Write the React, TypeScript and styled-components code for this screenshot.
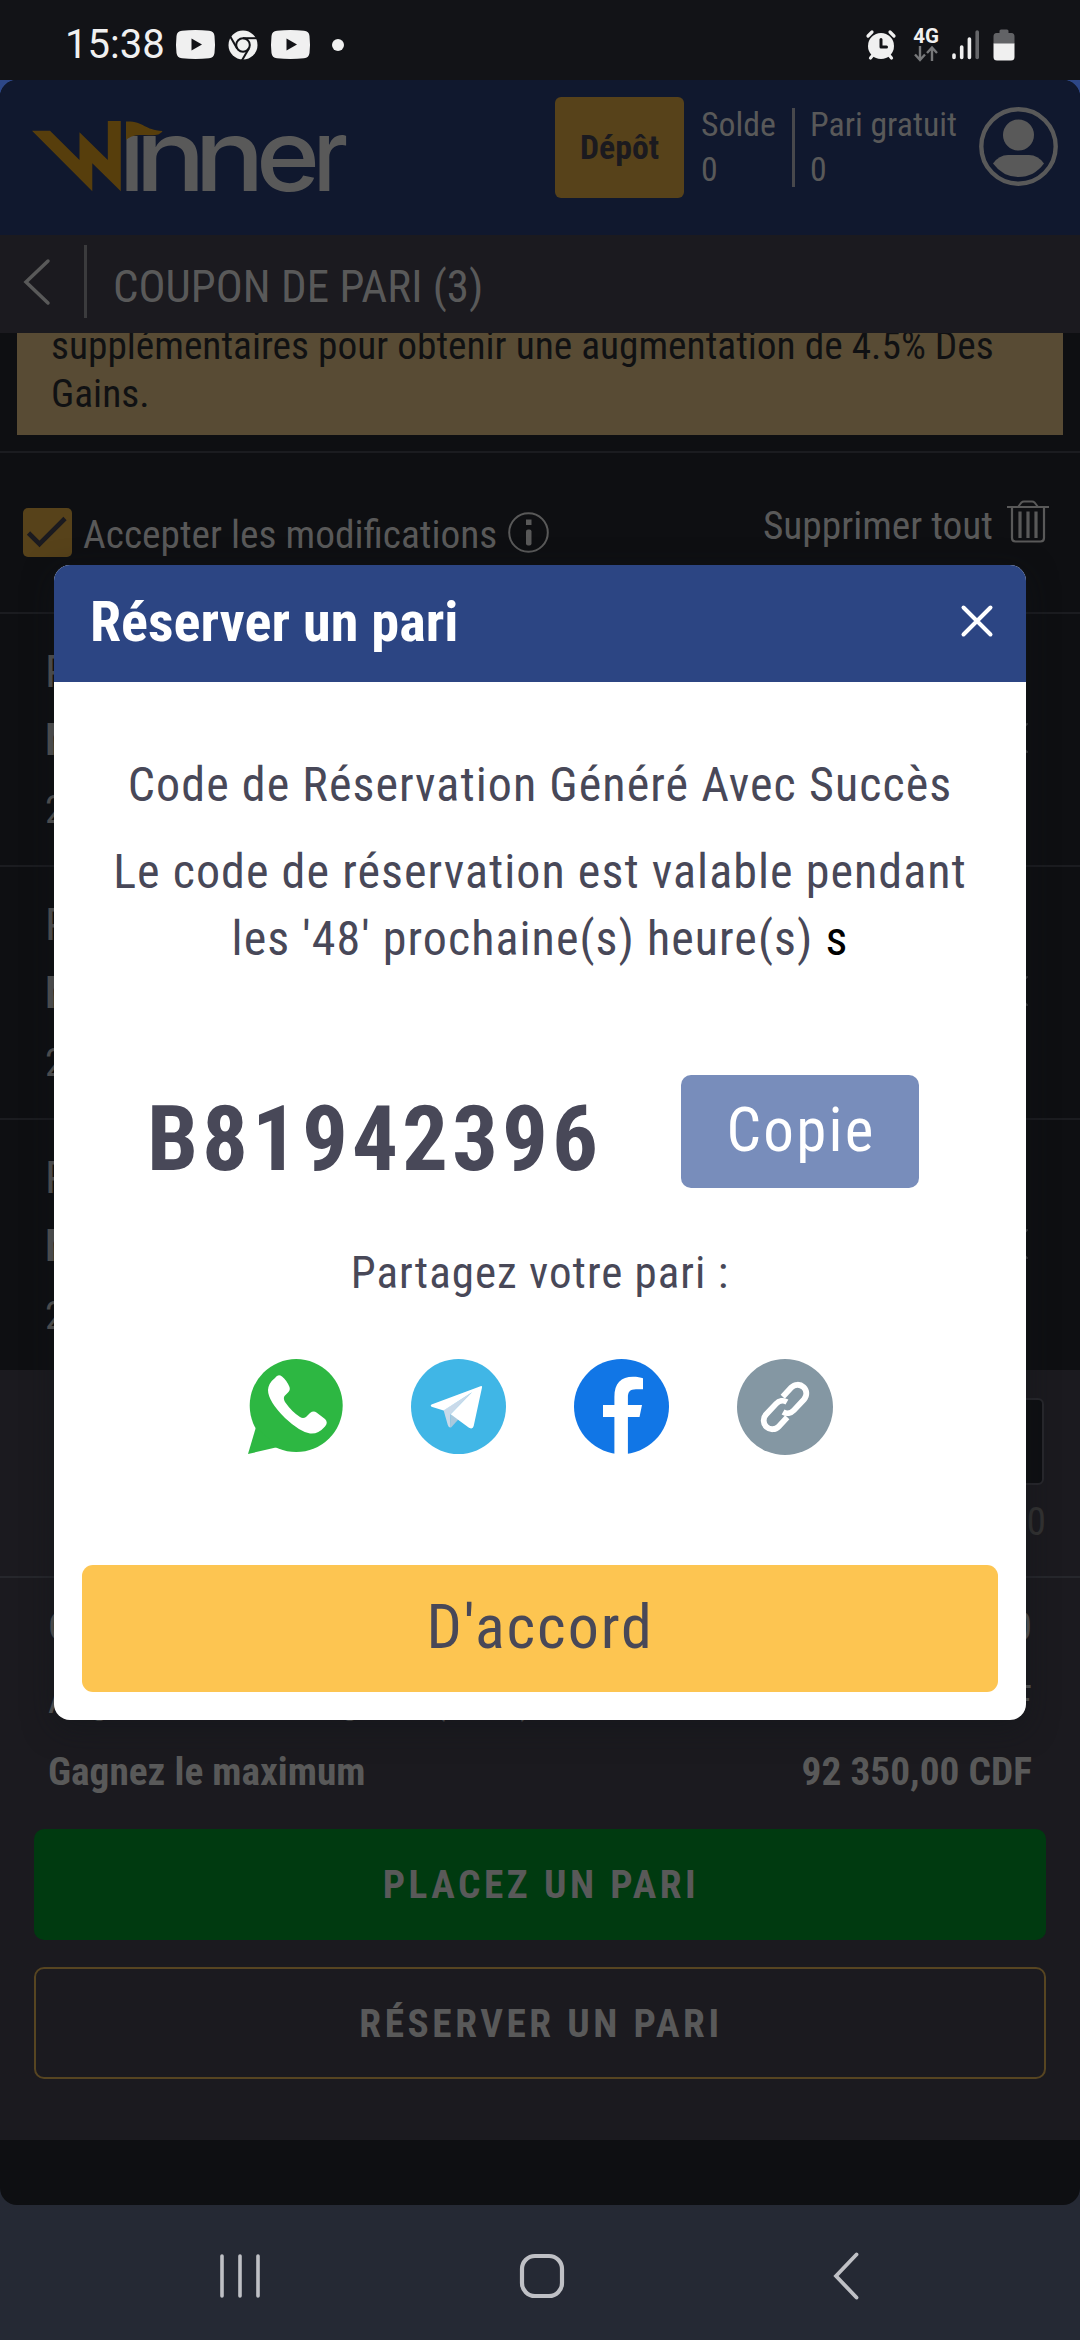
import React from "react";
import styled, { createGlobalStyle } from "styled-components";

const GlobalStyle = createGlobalStyle`
  *, *::before, *::after { box-sizing: border-box; }
  body { margin: 0; background: #252934; }
  svg { display: block; flex: none; overflow: visible; }
  button { font: inherit; border: 0; padding: 0; margin: 0; }
`;

const Screen = styled.div`
  width: 1080px;
  height: 2340px;
  display: flex;
  flex-direction: column;
  overflow: hidden;
  font-family: "Roboto Condensed", Roboto, sans-serif;
  background: #252934;
`;

/* ---------- system status bar ---------- */

const StatusBar = styled.div`
  height: 80px;
  flex: none;
  display: flex;
  align-items: center;
  padding: 9px 65px 0 65px;
  background: #121317;
  color: #f0f0f0;
`;

const Clock = styled.span`
  font-family: Roboto, sans-serif;
  font-size: 40px;
  line-height: 48px;
  width: 111px;
`;

const StatusGroup = styled.div`
  display: flex;
  align-items: center;
  gap: 13px;
`;

const Spacer = styled.div`
  flex: 1;
`;

const Dot = styled.i`
  width: 12px;
  height: 12px;
  margin-left: 9px;
  border-radius: 50%;
  background: #f0f0f0;
`;

const Network = styled.div`
  width: 26px;
  margin-left: 4px;
  display: flex;
  flex-direction: column;
  align-items: center;
  font: 700 20.5px/18px Roboto, sans-serif;
  gap: 1px;
`;

/* ---------- page ---------- */

const PageFrame = styled.div`
  flex: none;
  height: 2125px;
  background: linear-gradient(#2d4787 50%, #252934 50%);
`;

const Page = styled.div`
  position: relative;
  height: 100%;
  display: flex;
  flex-direction: column;
  border-radius: 17px;
  overflow: hidden;
  background: #0e0f12;
  color: #595959;
`;

const Header = styled.header`
  height: 155px;
  flex: none;
  display: flex;
  align-items: flex-start;
  padding: 17px 22px 0 32px;
  background: #10182e;
  font-size: 33.75px;
  line-height: 45px;
`;

const LogoBox = styled.div`
  margin-top: 24px;
  width: 523px;
`;

const DepositButton = styled.button`
  width: 129px;
  height: 101px;
  border-radius: 6px;
  background: #57421a;
  color: #1b1a1f;
  font-weight: 700;
`;

const Balance = styled.div<{ $width: number; $left: number }>`
  width: ${(p) => p.$width}px;
  margin: 5px 0 0 ${(p) => p.$left}px;
  white-space: nowrap;
`;

const HeaderRule = styled.div`
  width: 3px;
  height: 79px;
  margin-top: 11px;
  background: #48484c;
`;

const AvatarBox = styled.div`
  margin: 10px 0 0 auto;
`;

const TitleBar = styled.div`
  height: 98px;
  flex: none;
  display: flex;
  align-items: center;
  padding: 0 23px 5px;
  background: #1b1a1f;
`;

const TitleRule = styled.div`
  width: 3px;
  height: 73px;
  margin: 0 26px 0 34px;
  background: #3b3b3d;
`;

const PageTitle = styled.h1`
  margin: 10px 0 0;
  font-weight: 400;
  font-size: 45px;
  line-height: 54px;
`;

const Banner = styled.div`
  height: 102px;
  flex: none;
  margin: 0 17px 16px;
  padding: 0 34px 17px;
  display: flex;
  flex-direction: column;
  justify-content: flex-end;
  overflow: hidden;
  background: #584b34;
  color: #101113;
  font-size: 39.375px;
  line-height: 48px;
`;

const Options = styled.div`
  height: 163px;
  flex: none;
  display: flex;
  align-items: center;
  justify-content: space-between;
  padding: 0 31px 0 23px;
  border: solid #1b1c20;
  border-width: 2px 0;
  font-size: 39.375px;
  line-height: 48px;
`;

const OptionItem = styled.div<{ $drop: number }>`
  display: flex;
  align-items: center;
  margin-top: ${(p) => p.$drop}px;
`;

const Checkbox = styled.div`
  width: 49px;
  height: 49px;
  margin-right: 11px;
  border-radius: 5px;
  background: #57421a;
`;

const OptionText = styled.span<{ $gap: number; $shift: number }>`
  margin-right: ${(p) => p.$gap}px;
  padding-top: ${(p) => p.$shift}px;
`;

const Selection = styled.div<{ $last?: boolean }>`
  height: ${(p) => (p.$last ? 250 : 253)}px;
  flex: none;
  display: flex;
  justify-content: space-between;
  padding: 24px 52px 0 45px;
  border-bottom: ${(p) => (p.$last ? 0 : 2)}px solid #1b1c20;
`;

const Pick = styled.div`
  font-size: 45px;
  line-height: 67px;
`;

const Match = styled.div`
  font-size: 45px;
  font-weight: 700;
  line-height: 69px;
`;

const Odds = styled.div`
  font-size: 39.375px;
  line-height: 72px;
`;

const RemoveBox = styled.div`
  padding-top: 85px;
`;

const Panel = styled.section`
  height: 770px;
  flex: none;
  background: #1b1a1f;
  font-size: 39.375px;
`;

const StakeArea = styled.div`
  height: 208px;
  display: flex;
  flex-direction: column;
  align-items: flex-end;
  padding: 28px 36px 0 0;
  border-bottom: 2px solid #26272c;
`;

const StakeInput = styled.div`
  width: 360px;
  height: 87px;
  border: 2px solid #28282d;
  border-radius: 6px;
  background: #0e0f12;
`;

const StakeHint = styled.div`
  margin: 13px -2px 0 0;
  line-height: 48px;
  color: #333333;
`;

const Summary = styled.div`
  padding: 13px 48px 20px;
`;

const SummaryRow = styled.div<{ $strong?: boolean }>`
  display: flex;
  justify-content: space-between;
  line-height: 72.5px;
  font-weight: ${(p) => (p.$strong ? 700 : 400)};
`;

const ActionButton = styled.button<{ $outline?: boolean }>`
  display: block;
  width: 1012px;
  height: ${(p) => (p.$outline ? 112 : 111)}px;
  margin: 0 34px ${(p) => (p.$outline ? 0 : 27)}px;
  padding: ${(p) => (p.$outline ? 2 : 0)}px 0 0 2px;
  border-radius: 10px;
  border: ${(p) => (p.$outline ? "2px solid #574521" : "0")};
  background: ${(p) => (p.$outline ? "transparent" : "#003a10")};
  color: #595959;
  font-weight: 700;
  letter-spacing: 3.55px;
`;

/* ---------- dialog ---------- */

const Dialog = styled.div`
  position: absolute;
  left: 54px;
  top: 485px;
  width: 972px;
  height: 1155px;
  display: flex;
  flex-direction: column;
  border-radius: 16px;
  overflow: hidden;
  background: #fff;
  color: #484858;
  box-shadow: 0 8px 30px rgba(18, 22, 26, 0.5);
`;

const DialogHeader = styled.div`
  height: 117px;
  flex: none;
  display: flex;
  align-items: center;
  justify-content: space-between;
  padding: 0 33px 3px 36px;
  background: #2c4583;
  color: #fff;
  font-size: 56.25px;
  font-weight: 700;
`;

const CloseBox = styled.div`
  padding-bottom: 2px;
`;

const Message = styled.p`
  margin: 0 0 20px;
  font-size: 48px;
  line-height: 67px;
  letter-spacing: 1.07px;
  text-align: center;
  white-space: nowrap;
`;

const Suffix = styled.span`
  color: #000;
`;

const DialogBody = styled.div`
  flex: 1;
  padding: 69px 28px 28px;
  display: flex;
  flex-direction: column;
`;

const CodeRow = styled.div`
  display: flex;
  align-items: center;
  margin-top: 82px;
  padding-left: 65px;
`;

const Code = styled.strong`
  width: 534px;
  padding-top: 16px;
  font-size: 91px;
  line-height: 99px;
  letter-spacing: 4px;
`;

const CopyButton = styled.button`
  width: 238px;
  height: 113px;
  padding: 0 0 3px 2px;
  border-radius: 10px;
  background: #788dbb;
  color: #fff;
  font-size: 61px;
  letter-spacing: 2.2px;
`;

const ShareLabel = styled.div`
  margin: 58px 0 60px;
  font-size: 45px;
  line-height: 52px;
  letter-spacing: 1px;
  text-align: center;
`;

const ShareIcons = styled.div`
  display: flex;
  justify-content: center;
  gap: 68px;
`;

const OkButton = styled.button`
  height: 127px;
  margin-top: auto;
  padding: 0 0 4px;
  border-radius: 11px;
  background: #fdc551;
  color: #484858;
  font-size: 62px;
  letter-spacing: 1.9px;
`;

/* ---------- navigation bar ---------- */

const NavBar = styled.nav`
  flex: 1;
  display: flex;
  align-items: center;
  justify-content: space-between;
  padding: 7px 220px 0 218px;
`;

const HomeBox = styled.div`
  margin-right: 10px;
`;

/* ---------- drawings ---------- */

const YouTube = () => (
  <svg width="39" height="29" viewBox="0 0 39 29">
    <path d="M6 .8Q19.500-.8 33 .8Q38 1.200 38.500 6Q39.500 14.500 38.500 23Q38 27.800 33 28.200Q19.500 29.800 6 28.200Q1 27.800.5 23Q-.5 14.500.5 6Q1 1.200 6 .8Z" fill="#f0f0f0" />
    <path d="M15.500 8.500L26 14.500L15.500 20.500Z" fill="#121317" />
  </svg>
);

const Chrome = () => (
  <svg width="30" height="30" viewBox="-15 -15 30 30">
    <circle r="14.500" fill="#f0f0f0" />
    <g fill="none" stroke="#121317" strokeWidth="2">
      <circle r="6.800" />
      {[0, 120, 240].map((a) => (
        <path key={a} d="M0-6.800H14" transform={`rotate(${a})`} />
      ))}
    </g>
  </svg>
);

const Alarm = () => (
  <svg width="30" height="30" viewBox="0 0 30 30">
    <circle cx="15" cy="16" r="13" fill="#f0f0f0" />
    <g fill="none" stroke="#f0f0f0" strokeLinecap="round" strokeWidth="3.200">
      <path d="M2 6L6 2M28 6L24 2M4.500 28L7 25M25.500 28L23 25" />
    </g>
    <path d="M15 9.500V17H20.500" fill="none" stroke="#121317" strokeWidth="3" strokeLinecap="round" strokeLinejoin="round" />
  </svg>
);

const DataArrows = () => (
  <svg width="24" height="16" viewBox="0 0 24 16" fill="none" stroke="#77787a" strokeWidth="2.400">
    <path d="M6 0V14M1 8.500L6 14L11 8.500M18 15V2M13 7L18 1.500L23 7" />
  </svg>
);

const Signal = () => (
  <svg width="28" height="31" viewBox="0 0 28 31" strokeWidth="3.600" strokeLinecap="round" stroke="#f0f0f0">
    <path d="M2 26V28.500M9.700 18V28.500M17.400 10V28.500" />
    <path d="M25.200 3V28.500" stroke="#66676a" />
  </svg>
);

const Battery = () => (
  <svg width="22" height="32" viewBox="0 0 22 32">
    <path d="M6.500 4V2Q6.500.5 8 .5H14Q15.500.5 15.500 2V4H18.500Q21.500 4 21.500 7.500V15H.5V7.500Q.5 4 3.500 4Z" fill="#626366" />
    <path d="M.5 14.500H21.500V28Q21.500 31.500 18 31.500H4Q.5 31.500.5 28Z" fill="#f0f0f0" />
  </svg>
);

const wordmark = [
  { char: "ı", x: 87, width: 26 },
  { char: "n", x: 103, width: 71 },
  { char: "n", x: 162, width: 71 },
  { char: "e", x: 224, width: 64 },
  { char: "r", x: 281, width: 35 },
];

const Logo = () => (
  <svg width="316" height="72" viewBox="0 0 316 72">
    <path d="M0 9.700H18L47.500 39V11.300L75.800 39V0H88.800V70.300L60.300 42.300V70.300Z" fill="#573e0c" />
    <text fill="#595959" fontFamily="Inter, sans-serif" fontSize="100" fontWeight="550">
      {wordmark.map((l, i) => (
        <tspan key={i} x={l.x} y="70.300" textLength={l.width} lengthAdjust="spacingAndGlyphs">
          {l.char}
        </tspan>
      ))}
    </text>
    <path d="M94 .5C112 0 112 9 130.500 10C128 14 124 14.500 116 14.200C108 14 101 13 94 19Z" fill="#573e0c" />
  </svg>
);

const Avatar = () => (
  <svg width="79" height="79" viewBox="0 0 79 79" fill="#595959">
    <circle cx="39.500" cy="39.500" r="37.200" fill="none" stroke="#595959" strokeWidth="4.400" />
    <circle cx="39.500" cy="28" r="15.500" />
    <path d="M14 56.500Q20 48 29 48H50Q59 48 65 56.500Q55 70 39.500 70Q24 70 14 56.500Z" />
  </svg>
);

const Back = () => (
  <svg width="27" height="46" viewBox="0 0 27 46" fill="none" stroke="#595959" strokeWidth="3.500" strokeLinecap="round">
    <path d="M25 2L3 23L25 44" />
  </svg>
);

const Check = () => (
  <svg width="49" height="49" viewBox="0 0 49 49" fill="none" stroke="#1b1a1f" strokeWidth="4.600">
    <path d="M5.500 25L16.500 36L42 10.500" />
  </svg>
);

const Info = () => (
  <svg width="41" height="41" viewBox="0 0 41 41">
    <circle cx="20.500" cy="20.500" r="19.300" fill="none" stroke="#595959" strokeWidth="2" />
    <rect x="18" y="7.500" width="5.500" height="5.500" fill="#595959" />
    <rect x="18" y="17.500" width="5.500" height="16" rx="2" fill="#595959" />
  </svg>
);

const Trash = () => (
  <svg width="42" height="43" viewBox="0 0 42 43" fill="none" stroke="#595959">
    <path d="M0 7H42" strokeWidth="2" />
    <path d="M11 7L14.500 2.500Q15.500 1.500 17 1.500H25Q26.500 1.500 27.500 2.500L31 7" strokeWidth="2" />
    <path d="M5 7V38Q5 41.500 8.500 41.500H33.500Q37 41.500 37 38V7" strokeWidth="2.200" />
    <path d="M13 11.500V38M21 11.500V38M29 11.500V38" strokeWidth="3.200" />
  </svg>
);

const Remove = () => (
  <svg width="30" height="30" viewBox="0 0 30 30" stroke="#3d3e40" strokeWidth="2" strokeLinecap="round">
    <path d="M1 1L29 29M29 1L1 29" />
  </svg>
);

const Close = () => (
  <svg width="32" height="32" viewBox="0 0 32 32" stroke="#fff" strokeWidth="4" strokeLinecap="round">
    <path d="M2.500 2.500L29.500 29.500M29.500 2.500L2.500 29.500" />
  </svg>
);

const WhatsApp = () => (
  <svg width="95" height="95" viewBox="0 0 95 95">
    <circle cx="48.200" cy="46.600" r="46.500" fill="#2db742" />
    <path d="M0 95L8 68L30 88Z" fill="#2db742" />
    <path d="M27 19Q30 14.500 34 17.500Q38.500 21 41.500 28Q42.500 31 40 33.500L36.500 37Q35 39.500 37 43Q44 53 52 58Q55 60 58 58L62 54Q65.500 51.500 68.500 53.500L77 60Q80.500 63.500 77 67.500Q70 75.500 62 74.500Q52 73 37 59Q20 42 20 31Q20.500 24 27 19Z" fill="#fff" />
  </svg>
);

const Telegram = () => (
  <svg width="95" height="95" viewBox="0 0 95 95">
    <circle cx="47.500" cy="47.500" r="47.500" fill="#40b6e6" />
    <path d="M32.600 51.300L61 33.300L39.600 55.300L39 68.500Q37.500 68 36.800 66Z" fill="#c9daea" />
    <path d="M39.600 55.300L47.300 60.500L40.500 68Q39.500 69 39 68.300Z" fill="#a9c9dd" />
    <path d="M69.500 27.200L20.500 45.500Q18.800 46.500 20.500 47.700L32.600 51.500L61 33.300L39.600 55.300L58 68.700Q61.800 70.700 62.700 67L71 28.500Q71.300 26.500 69.500 27.200Z" fill="#fff" />
  </svg>
);

const Facebook = () => (
  <svg width="95" height="95" viewBox="0 0 95 95">
    <circle cx="47.500" cy="47.500" r="47.500" fill="#1176e6" />
    <path d="M40.400 95V58H29V46H40.400V38C40.400 24 47 17.700 59 17.700C63 17.700 67 18.300 69 19.300V30.300H62C56 30.300 53.900 33 53.900 38V46H68L65.500 58H53.900V95Z" fill="#fff" />
  </svg>
);

const CopyLink = () => (
  <svg width="96" height="96" viewBox="0 0 96 96">
    <circle cx="48" cy="48" r="48" fill="#8497a3" />
    <g transform="translate(48 48) rotate(-47)" fill="none" stroke="#fff" strokeWidth="5.800">
      <path d="M6-8.700H18.500A8.700 8.700 0 0 1 18.500 8.700H3.500A8.700 8.700 0 0 1-5 2" />
      <path d="M6-8.700H18.500A8.700 8.700 0 0 1 18.500 8.700H3.500A8.700 8.700 0 0 1-5 2" transform="rotate(180)" />
    </g>
  </svg>
);

const Recents = () => (
  <svg width="44" height="46" viewBox="0 0 44 46" stroke="#bfc0c5" strokeWidth="3.600" strokeLinecap="round">
    <path d="M4 3V43M22 3V43M40 3V43" />
  </svg>
);

const Home = () => (
  <svg width="46" height="46" viewBox="0 0 46 46">
    <rect x="3" y="3" width="40" height="40" rx="13" fill="none" stroke="#bfc0c5" strokeWidth="4.200" />
  </svg>
);

const NavBack = () => (
  <svg width="28" height="48" viewBox="0 0 28 48" fill="none" stroke="#bfc0c5" strokeWidth="3.800" strokeLinecap="round">
    <path d="M24.500 2.500L4 24L24.500 45.500" />
  </svg>
);

/* ---------- screen ---------- */

const selections = [
  { pick: "P", match: "M", odds: "2" },
  { pick: "P", match: "M", odds: "2" },
  { pick: "P", match: "M", odds: "2" },
];

const totals = [
  { label: "Cote", value: "0" },
  { label: "Augmentation des gains (4.5%)", value: "F" },
  { label: "Gagnez le maximum", value: "92 350,00 CDF", strong: true },
];

export default function App() {
  return (
    <Screen>
      <GlobalStyle />
      <StatusBar>
        <Clock>15:38</Clock>
        <StatusGroup>
          <YouTube />
          <Chrome />
          <YouTube />
          <Dot />
        </StatusGroup>
        <Spacer />
        <StatusGroup>
          <Alarm />
          <Network>
            4G
            <DataArrows />
          </Network>
          <Signal />
          <Battery />
        </StatusGroup>
      </StatusBar>

      <PageFrame>
        <Page>
          <Header>
            <LogoBox>
              <Logo />
            </LogoBox>
            <DepositButton>Dépôt</DepositButton>
            <Balance $width={91} $left={17}>
              Solde
              <br />0
            </Balance>
            <HeaderRule />
            <Balance $width={150} $left={15}>
              Pari gratuit
              <br />0
            </Balance>
            <AvatarBox>
              <Avatar />
            </AvatarBox>
          </Header>

          <TitleBar>
            <Back />
            <TitleRule />
            <PageTitle>COUPON DE PARI (3)</PageTitle>
          </TitleBar>

          <Banner>
            <div>
              supplémentaires pour obtenir une augmentation de 4.5% Des
              <br />
              Gains.
            </div>
          </Banner>

          <Options>
            <OptionItem $drop={0}>
              <Checkbox>
                <Check />
              </Checkbox>
              <OptionText $gap={11} $shift={4}>
                Accepter les modifications
              </OptionText>
              <Info />
            </OptionItem>
            <OptionItem $drop={-23}>
              <OptionText $gap={14} $shift={9}>
                Supprimer tout
              </OptionText>
              <Trash />
            </OptionItem>
          </Options>

          {selections.map((s, i) => (
            <Selection key={i} $last={i === selections.length - 1}>
              <div>
                <Pick>{s.pick}</Pick>
                <Match>{s.match}</Match>
                <Odds>{s.odds}</Odds>
              </div>
              <RemoveBox>
                <Remove />
              </RemoveBox>
            </Selection>
          ))}

          <Panel>
            <StakeArea>
              <StakeInput />
              <StakeHint>0</StakeHint>
            </StakeArea>
            <Summary>
              {totals.map((t) => (
                <SummaryRow key={t.label} $strong={t.strong}>
                  <span>{t.label}</span>
                  <span>{t.value}</span>
                </SummaryRow>
              ))}
            </Summary>
            <ActionButton>PLACEZ UN PARI</ActionButton>
            <ActionButton $outline>RÉSERVER UN PARI</ActionButton>
          </Panel>

          <Dialog role="dialog">
            <DialogHeader>
              Réserver un pari
              <CloseBox>
                <Close />
              </CloseBox>
            </DialogHeader>
            <DialogBody>
              <Message>Code de Réservation Généré Avec Succès</Message>
              <Message>
                Le code de réservation est valable pendant
                <br />
                les '48' prochaine(s) heure(s) <Suffix>s</Suffix>
              </Message>
              <CodeRow>
                <Code>B81942396</Code>
                <CopyButton>Copie</CopyButton>
              </CodeRow>
              <ShareLabel>Partagez votre pari :</ShareLabel>
              <ShareIcons>
                <WhatsApp />
                <Telegram />
                <Facebook />
                <CopyLink />
              </ShareIcons>
              <OkButton>D'accord</OkButton>
            </DialogBody>
          </Dialog>
        </Page>
      </PageFrame>

      <NavBar>
        <Recents />
        <HomeBox>
          <Home />
        </HomeBox>
        <NavBack />
      </NavBar>
    </Screen>
  );
}
